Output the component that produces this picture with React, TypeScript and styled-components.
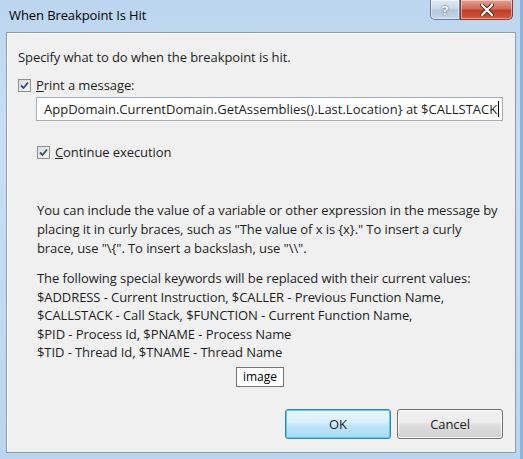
import styled, { createGlobalStyle } from 'styled-components'

const Global = createGlobalStyle`
  html, body {
    margin: 0;
    padding: 0;
    background: #ffffff;
  }
  body {
    font-family: 'Open Sans', 'Noto Sans', sans-serif;
  }
`

const Frame = styled.div`
  width: 523px;
  height: 459px;
  box-sizing: border-box;
  display: flex;
  flex-direction: column;
  background: linear-gradient(180deg, #bcd6ef 0%, #c9def3 30%, #bcd5ee 100%);
  border-right: 3px solid #8fb4d9;
  padding: 0 4px 6px 6px;
`

const TitleBar = styled.div`
  height: 32px;
  flex: none;
  display: flex;
  align-items: flex-start;
  justify-content: space-between;
`

const Title = styled.div`
  font-size: 13px;
  letter-spacing: -0.1px;
  color: #000;
  padding: 6px 0 0 3px;
`

const Caption = styled.div`
  display: flex;
  margin-right: 3px;
`

const CaptionButton = styled.div<{ $close?: boolean }>`
  height: 20px;
  box-sizing: border-box;
  display: flex;
  align-items: center;
  justify-content: center;
  border: 1px solid ${(p) => (p.$close ? '#8a3a2e' : '#6d7f95')};
  border-top: none;
  width: ${(p) => (p.$close ? '53px' : '30px')};
  border-radius: ${(p) => (p.$close ? '0 0 5px 0' : '0 0 0 5px')};
  background: ${(p) =>
    p.$close
      ? 'linear-gradient(180deg, #e3a293 0%, #d36a55 45%, #c13e26 55%, #cf5a3c 100%)'
      : 'linear-gradient(180deg, #e3ecf6 0%, #c7d6e8 45%, #b3c6dd 55%, #c5d7ec 100%)'};
  box-shadow: inset 0 0 0 1px rgba(255, 255, 255, 0.45);
`

const HelpGlyph = styled.span`
  font-size: 13px;
  font-weight: 700;
  color: #fff;
  text-shadow: 0 0 2px #34465c;
`

const Client = styled.div`
  flex: 1;
  background: #f0f0f0;
  border: 1px solid #8a9db3;
  box-shadow: inset 1px 1px 0 #fff;
  display: flex;
  flex-direction: column;
  padding: 15px 12px 13px 11px;
  color: #1e1e1e;
  font-size: 13px;
  letter-spacing: -0.08px;
  line-height: 19px;
`

const Line = styled.div`
  white-space: nowrap;
`

const CheckRow = styled.label<{ $indent?: number; $mt?: number }>`
  display: flex;
  align-items: center;
  gap: 5px;
  padding-left: ${(p) => p.$indent ?? 0}px;
  margin-top: ${(p) => p.$mt ?? 0}px;
`

const Box = styled.span`
  width: 13px;
  height: 13px;
  box-sizing: border-box;
  border: 1px solid #8e8f8f;
  background: linear-gradient(135deg, #dcdcdc 0%, #f6f6f6 100%);
  display: flex;
  align-items: center;
  justify-content: center;
`

const TextBox = styled.div`
  margin: 2px 0 0 18px;
  height: 24px;
  box-sizing: border-box;
  border: 1px solid #abadb3;
  border-top-color: #a2aabb;
  background: #fff;
  display: flex;
  align-items: center;
  padding-left: 7px;
  letter-spacing: 0;
  white-space: nowrap;
  overflow: hidden;
`

const Caret = styled.span`
  display: inline-block;
  width: 1px;
  height: 16px;
  background: #000;
  margin-left: 1px;
`

const Paragraph = styled.div<{ $mt: number; $lh: number }>`
  margin-top: ${(p) => p.$mt}px;
  line-height: ${(p) => p.$lh}px;
  padding-left: 19px;
  white-space: nowrap;
`

const ImageTag = styled.div`
  align-self: center;
  margin: 5px 0 0 -1px;
  border: 1px solid #777;
  background: #fff;
  padding: 0 6px;
  height: 20px;
  box-sizing: border-box;
  display: flex;
  align-items: center;
  font-size: 12px;
  letter-spacing: 0;
  color: #000;
`

const Buttons = styled.div`
  margin-top: auto;
  display: flex;
  justify-content: flex-end;
  gap: 6px;
`

const Button = styled.div<{ $default?: boolean }>`
  width: 106px;
  height: 30px;
  box-sizing: border-box;
  border-radius: 3px;
  display: flex;
  align-items: center;
  justify-content: center;
  font-size: 13px;
  color: #1e1e1e;
  border: 1px solid ${(p) => (p.$default ? '#3c7fb1' : '#707070')};
  background: ${(p) =>
    p.$default
      ? 'linear-gradient(180deg, #eaf6fd 0%, #d9f0fc 45%, #bee6fd 55%, #a7d9f5 100%)'
      : 'linear-gradient(180deg, #f2f2f2 0%, #ebebeb 45%, #dddddd 55%, #cfcfcf 100%)'};
  box-shadow: ${(p) =>
    p.$default ? 'inset 0 0 0 1px #48d4f4' : 'inset 0 0 0 1px #fcfcfc'};
`

const Check = () => (
  <svg width="9" height="9" viewBox="0 0 9 9">
    <path d="M1 4.5 L3.5 7 L8 1.5" fill="none" stroke="#2c4f7c" strokeWidth="1.8" />
  </svg>
)

const App = () => {
  return (
    <>
      <Global />
      <Frame>
        <TitleBar>
          <Title>When Breakpoint Is Hit</Title>
          <Caption>
            <CaptionButton>
              <HelpGlyph>?</HelpGlyph>
            </CaptionButton>
            <CaptionButton $close>
              <svg width="14" height="12" viewBox="0 0 14 12">
                <path d="M2 1 L12 11 M12 1 L2 11" stroke="#5a1c12" strokeWidth="4" strokeLinecap="round" />
                <path d="M2 1 L12 11 M12 1 L2 11" stroke="#fff" strokeWidth="2.4" strokeLinecap="round" />
              </svg>
            </CaptionButton>
          </Caption>
        </TitleBar>
        <Client>
          <Line>Specify what to do when the breakpoint is hit.</Line>
          <CheckRow $mt={9}>
            <Box><Check /></Box>
            <span><u>P</u>rint a message:</span>
          </CheckRow>
          <TextBox>
            AppDomain.CurrentDomain.GetAssemblies().Last.Location&#125; at $CALLSTACK<Caret />
          </TextBox>
          <CheckRow $indent={19} $mt={22}>
            <Box><Check /></Box>
            <span><u>C</u>ontinue execution</span>
          </CheckRow>
          <Paragraph $mt={39} $lh={19}>
            You can include the value of a variable or other expression in the message by
            <br />
            placing it in curly braces, such as "The value of x is &#123;x&#125;." To insert a curly
            <br />
            brace, use "\&#123;". To insert a backslash, use "\\".
          </Paragraph>
          <Paragraph $mt={11} $lh={18.6}>
            The following special keywords will be replaced with their current values:
            <br />
            $ADDRESS - Current Instruction, $CALLER - Previous Function Name,
            <br />
            $CALLSTACK - Call Stack, $FUNCTION - Current Function Name,
            <br />
            $PID - Process Id, $PNAME - Process Name
            <br />
            $TID - Thread Id, $TNAME - Thread Name
          </Paragraph>
          <ImageTag>image</ImageTag>
          <Buttons>
            <Button $default>OK</Button>
            <Button>Cancel</Button>
          </Buttons>
        </Client>
      </Frame>
    </>
  )
}

export default App
